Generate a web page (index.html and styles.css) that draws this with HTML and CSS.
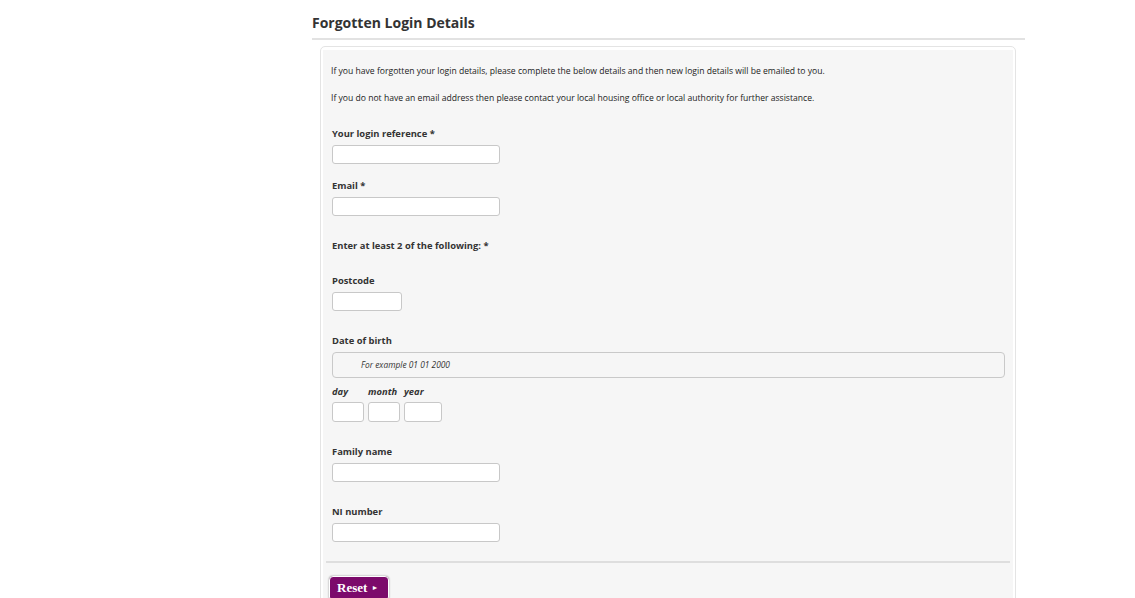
FILE: index.html
```html
<!DOCTYPE html>
<html lang="en">
<head>
  <meta charset="UTF-8">
  <title>Forgotten Login Details</title>
  <link rel="stylesheet" href="styles.css">
</head>
<body>
  <div class="page">
    <h2 class="title">Forgotten Login Details</h2>
    <div class="box">
      <div class="panel">
        <p class="intro">If you have forgotten your login details, please complete the below details and then new login details will be emailed to you.</p>
        <p class="intro second">If you do not have an email address then please contact your local housing office or local authority for further assistance.</p>

        <div class="field first">
          <label for="ref">Your login reference *</label>
          <input id="ref" type="text" class="wide">
        </div>
        <div class="field close">
          <label for="email">Email *</label>
          <input id="email" type="text" class="wide">
        </div>
        <div class="field">
          <div class="label">Enter at least 2 of the following: *</div>
        </div>
        <div class="field after-note">
          <label for="postcode">Postcode</label>
          <input id="postcode" type="text" class="short">
        </div>
        <div class="field">
          <label>Date of birth</label>
          <div class="hint">For example 01 01 2000</div>
          <div class="dob-labels">
            <span class="dob-day">day</span>
            <span class="dob-month">month</span>
            <span>year</span>
          </div>
          <div class="dob">
            <input type="text" class="day">
            <input type="text" class="day">
            <input type="text" class="year">
          </div>
        </div>
        <div class="field">
          <label for="family">Family name</label>
          <input id="family" type="text" class="wide">
        </div>
        <div class="field">
          <label for="ni">NI number</label>
          <input id="ni" type="text" class="wide">
        </div>

        <div class="divider"></div>
        <div class="actions">
          <button class="reset">Reset <span class="arrow">&#9658;</span></button>
        </div>
      </div>
    </div>
  </div>
</body>
</html>
```

FILE: styles.css
```css
body {
  margin: 0;
  background: #fff;
  font-family: 'Open Sans', 'Noto Sans', sans-serif;
  color: #222;
}
.page {
  margin-left: 312px;
  width: 713px;
}
.title {
  margin: 0;
  padding-top: 14px;
  padding-bottom: 6px;
  font-size: 14px;
  line-height: 18px;
  font-weight: bold;
  color: #333;
  border-bottom: 2px solid #e2e2e2;
}
.box {
  margin: 6px 9px 0 8px;
  border: 1px solid #e4e4e4;
  border-radius: 5px;
  padding: 3px 2px 0 2px;
  background: #fff;
}
.panel {
  background: #f6f6f6;
  padding: 15px 8px 0 8px;
}
.intro {
  margin: 0;
  font-size: 8.6px;
  line-height: 12px;
  color: #222;
}
.intro.second {
  margin-top: 15px;
}
.field {
  margin-top: 23px;
}
.field.first {
  margin-top: 23px;
}
.field.close {
  margin-top: 15px;
}
.field.after-note {
  margin-top: 22px;
}
label, .label {
  display: block;
  font-size: 9.4px;
  line-height: 13px;
  font-weight: bold;
  color: #333;
  margin: 0 0 5px 1px;
}
input {
  display: block;
  box-sizing: border-box;
  height: 19px;
  margin-left: 1px;
  border: 1px solid #c8c8c8;
  border-radius: 3px;
  background: #fff;
}
.wide { width: 168px; }
.short { width: 70px; }
.hint {
  margin-left: 1px;
  height: 26px;
  box-sizing: border-box;
  border: 1px solid #c9c9c9;
  border-radius: 4px;
  padding-left: 28px;
  font-size: 8.4px;
  line-height: 24px;
  font-style: italic;
  color: #333;
}
.dob-labels {
  display: flex;
  margin: 7px 0 4px 1px;
  font-size: 9.4px;
  line-height: 13px;
  font-weight: bold;
  font-style: italic;
  color: #333;
}
.dob-day { width: 36px; }
.dob-month { width: 36px; }
.dob {
  display: flex;
  gap: 4px;
  margin-left: 1px;
}
.dob input { margin-left: 0; height: 20px; }
.day { width: 32px; }
.year { width: 38px; }
.divider {
  margin: 19px -5px 0 -5px;
  height: 2px;
  background: #dedede;
}
.actions {
  padding: 12px 0 10px 0;
}
.reset {
  margin-left: -2px;
  padding: 2px 9px 3px 7px;
  background: #7c0a6b;
  color: #fff;
  border: 1px solid #fff;
  border-radius: 4px;
  box-shadow: 0 0 2px rgba(0,0,0,0.45);
  font-family: 'Liberation Serif', serif;
  font-weight: bold;
  font-size: 13px;
  line-height: 18px;
}
.arrow {
  font-size: 7px;
  vertical-align: 2px;
  margin-left: 1px;
}
```
